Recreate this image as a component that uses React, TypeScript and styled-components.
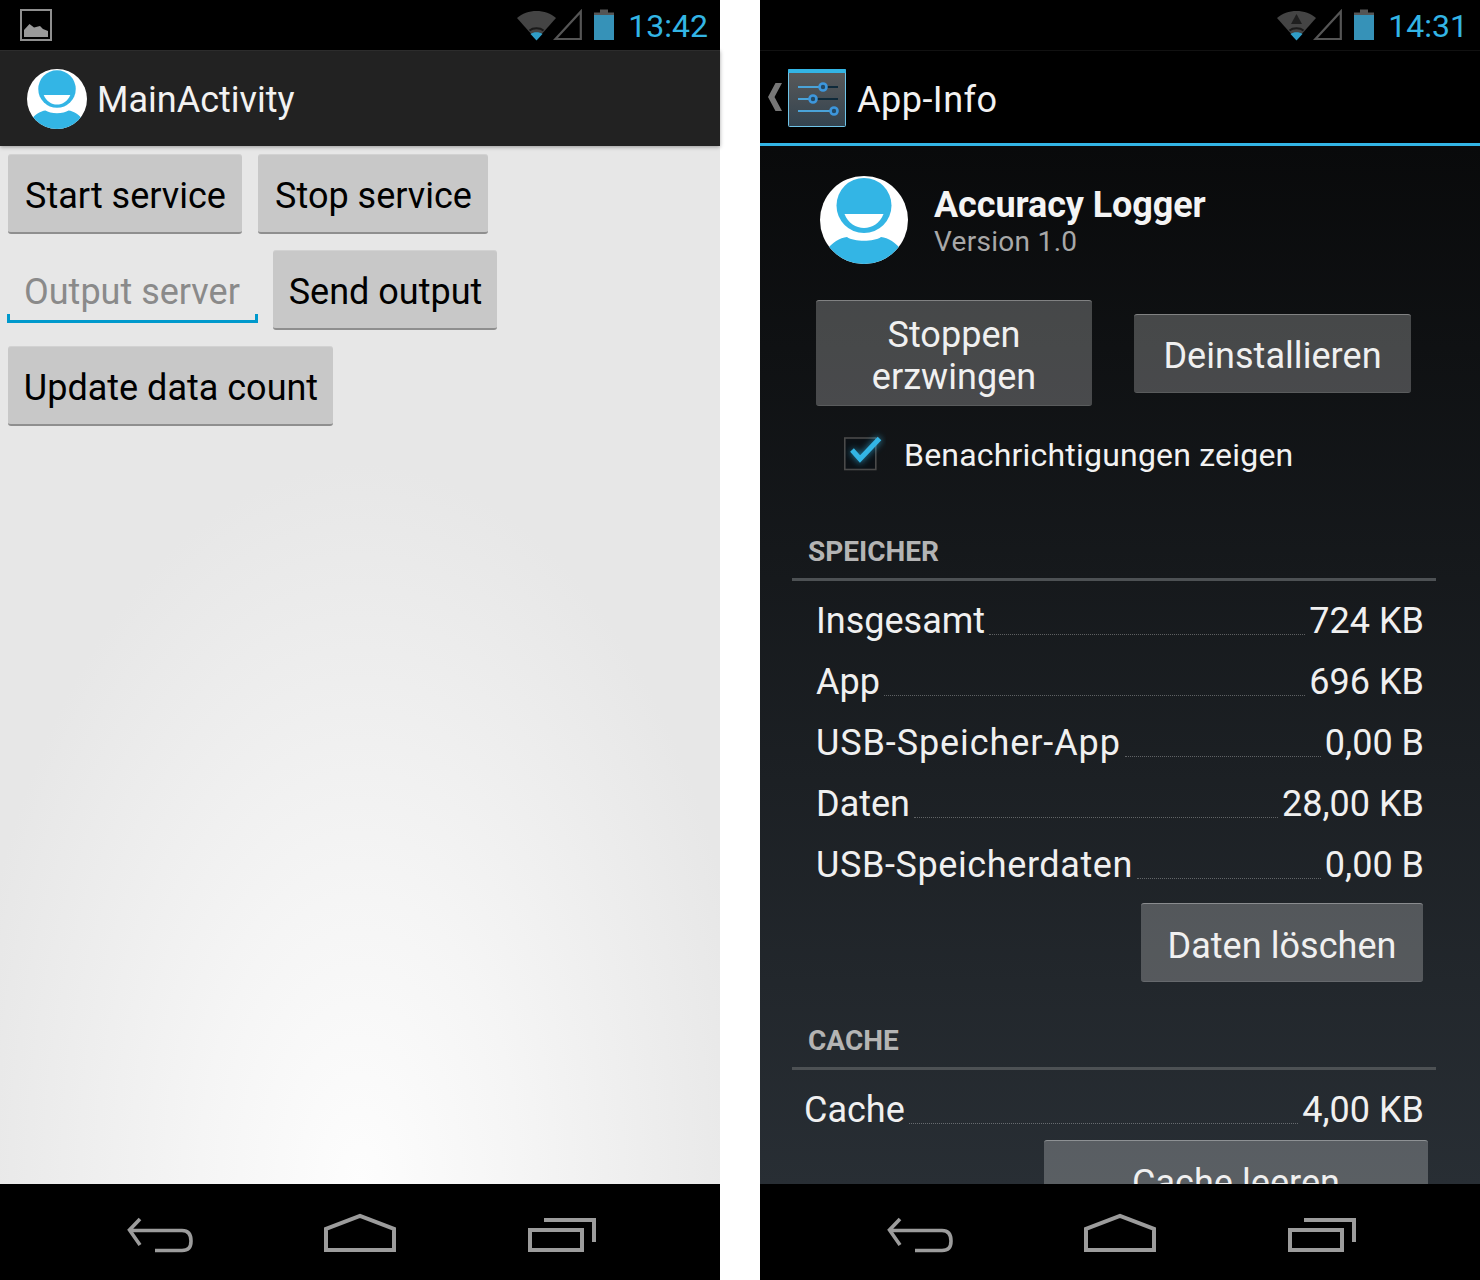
import React from "react";
import styled, { createGlobalStyle } from "styled-components";

const Global = createGlobalStyle`
  html, body { margin: 0; padding: 0; background: #fff; }
  body { font-family: Roboto, "Liberation Sans", sans-serif; }
  *, *::after { box-sizing: border-box; }
`;

const Page = styled.div`
  width: 1480px;
  height: 1280px;
  display: flex;
  gap: 40px;
  background: #fff;
`;
const Phone = styled.section`
  width: 720px;
  height: 1280px;
  display: flex;
  flex-direction: column;
  background: #000;
  position: relative;
`;
const StatusBar = styled.header`
  height: 50px;
  flex: none;
  display: flex;
  align-items: center;
  background: #000;
  padding: 0 12px 0 20px;
`;
const StatusRight = styled.div`
  margin-left: auto;
  display: flex;
  align-items: center;
`;
const Clock = styled.span`
  font-size: 32px;
  font-weight: 400;
  color: #33b5e5;
  margin: 2px 0 0 14px;
  line-height: 50px;
`;
const ActionBar = styled.div<{ $dark?: boolean }>`
  height: 96px;
  flex: none;
  display: flex;
  align-items: center;
  background: ${(p) => (p.$dark ? "#000" : "#222222")};
  border-top: 1px solid ${(p) => (p.$dark ? "#111" : "#2c2c2c")};
  border-bottom: ${(p) => (p.$dark ? "3px solid #33b5e5" : "0")};
  padding-left: ${(p) => (p.$dark ? "8px" : "27px")};
  position: relative;
  z-index: 2;
  ${(p) => (p.$dark ? "" : "box-shadow: 0 1px 4px rgba(0,0,0,.35);")}
`;
const BarTitle = styled.h1<{ $dark?: boolean }>`
  margin: ${(p) => (p.$dark ? "5px 0 0 11px" : "2px 0 0 10px")};
  font-size: 36px;
  font-weight: 400;
  color: #f2f2f2;
  line-height: 48px;
  letter-spacing: ${(p) => (p.$dark ? "0.5px" : "0")};
`;
const LightContent = styled.main`
  height: 1038px;
  flex: none;
  padding: 8px;
  display: flex;
  flex-direction: column;
  gap: 16px;
  background: radial-gradient(ellipse 400px 720px at 50% 100%, #fdfdfd 0%, #f5f5f5 40%, #e7e7e7 100%);
`;
const ButtonRow = styled.div`
  display: flex;
  align-items: center;
`;
const LightButton = styled.button<{ $w: number; $ml?: number }>`
  width: ${(p) => p.$w}px;
  margin-left: ${(p) => p.$ml ?? 0}px;
  height: 80px;
  padding: 4px 0 0 1px;
  border: 0;
  border-top: 1px solid #d2d2d2;
  border-bottom: 2px solid #8f8f8f;
  border-radius: 3px;
  background: #c8c8c8;
  color: #000;
  font: 400 36px/1 Roboto, sans-serif;
`;
const Field = styled.div`
  width: 250px;
  height: 80px;
  position: relative;
  padding: 22px 0 0 16px;
  font-size: 36px;
  line-height: 40px;
  color: #8a8a8a;
  &::after {
    content: "";
    position: absolute;
    left: -1px;
    right: 0;
    top: 64px;
    height: 9px;
    border: 3px solid #0099cc;
    border-top: 0;
  }
`;
const DarkContent = styled.main`
  height: 1038px;
  flex: none;
  overflow: hidden;
  background: linear-gradient(#090a0b 0%, #282e34 100%);
  display: flex;
  flex-direction: column;
  & > * {
    flex-shrink: 0;
  }
`;
const AppHead = styled.div`
  display: flex;
  align-items: center;
  margin: 30px 0 0 60px;
`;
const AppText = styled.div`
  margin-left: 26px;
  display: flex;
  flex-direction: column;
  padding-top: 3px;
`;
const AppName = styled.div`
  font-size: 36px;
  font-weight: 700;
  line-height: 40px;
  letter-spacing: -0.1px;
  color: #f4f4f4;
`;
const AppVersion = styled.div`
  font-size: 28px;
  line-height: 34px;
  letter-spacing: 0.3px;
  color: #a8a8a8;
`;
const Actions = styled.div`
  display: flex;
  align-items: center;
  gap: 42px;
  margin: 36px 0 0 56px;
`;
const DarkButton = styled.button<{ $w: number; $h?: number; $mr?: number; $mt?: number }>`
  width: ${(p) => p.$w}px;
  height: ${(p) => p.$h ?? 79}px;
  ${(p) => (p.$mr !== undefined ? `margin: ${p.$mt ?? 0}px ${p.$mr}px 0 auto;` : "")}
  flex: none;
  padding: 6px 12px 0;
  border: 0;
  border-top: 1px solid rgba(255, 255, 255, 0.32);
  border-bottom: 1px solid rgba(255, 255, 255, 0.1);
  border-radius: 3px;
  background: rgba(255, 255, 255, 0.235);
  color: #f0f0f0;
  font: 400 36px/42px Roboto, sans-serif;
  letter-spacing: 0.05px;
`;
const CheckRow = styled.label`
  height: 98px;
  display: flex;
  align-items: center;
  margin-left: 84px;
  font-size: 32px;
  letter-spacing: 0.2px;
  color: #f2f2f2;
  gap: 18px;
`;
const SectionHead = styled.h2<{ $mt: number }>`
  margin: ${(p) => p.$mt}px 0 0 32px;
  width: 644px;
  height: 51px;
  padding: 1px 0 0 16px;
  font-size: 28px;
  font-weight: 700;
  line-height: 42px;
  color: #b4b4b4;
  border-bottom: 3px solid #4d5154;
`;
const InfoRows = styled.div<{ $left: number; $mt: number }>`
  margin: ${(p) => p.$mt}px 56px 0 ${(p) => p.$left}px;
  display: flex;
  flex-direction: column;
`;
const InfoRow = styled.div`
  height: 61px;
  display: flex;
  align-items: center;
  padding-bottom: 2px;
  font-size: 36px;
  color: #f0f0f0;
`;
const RowLabel = styled.span<{ $ls?: number }>`
  letter-spacing: ${(p) => p.$ls ?? 0}px;
`;
const Leader = styled.span`
  flex: 1;
  align-self: flex-end;
  margin: 0 4px 15px 4px;
  border-bottom: 1px dotted rgba(255, 255, 255, 0.3);
`;
const NavBar = styled.nav`
  height: 96px;
  flex: none;
  display: flex;
  justify-content: center;
  align-items: center;
  padding-top: 4px;
  background: #000;
  position: relative;
  z-index: 2;
`;
const NavCell = styled.div`
  width: 200px;
  display: flex;
  justify-content: center;
`;

const Logo = ({ size }: { size: number }) => (
  <svg width={size} height={size} viewBox="0 0 88 88" style={{ flex: "none" }}>
    <defs>
      <clipPath id={`c${size}`}>
        <circle cx="44" cy="44" r="44" />
      </clipPath>
    </defs>
    <circle cx="44" cy="44" r="44" fill="#fff" />
    <circle cx="44" cy="29.5" r="27.5" fill="#33b5e5" />
    <path d="M24.5 38 H63.5 C60 47 52 52 44 52 C36 52 28 47 24.5 38 Z" fill="#fff" />
    <path
      clipPath={`url(#c${size})`}
      d="M0 88 L6 75 C12 66 20 62 27 61 C34 66 54 66 61 61 C68 62 76 66 82 75 L88 88 Z"
      fill="#33b5e5"
    />
  </svg>
);

const PictureIcon = () => (
  <svg width="32" height="32" viewBox="0 0 32 32">
    <rect x="1" y="1" width="30" height="30" fill="none" stroke="#8f8f8f" strokeWidth="2" />
    <path d="M4 28 V21 L9.5 15 L14 18.5 L20 17 L23 20 L28 22 V28 Z" fill="#9a9a9a" />
  </svg>
);

const SignalIcons = ({ upload }: { upload?: boolean }) => (
  <svg width="97" height="32" viewBox="0 0 97 32">
    <path d="M0 9 C10 -0.5 29 -0.5 39 9 L19.5 31 Z" fill="#444" />
    <path d="M12.5 21.5 C16 18.5 23 18.5 26.5 21.5" stroke="#1a1a1a" strokeWidth="2" fill="none" />
    <path d="M13.5 25 C16.5 22.5 22.5 22.5 25.5 25 L19.5 31.5 Z" fill="#2f9ec8" />
    {upload && <path d="M19.5 5 L25 15 H14 Z" fill="#1f1f1f" />}
    <path d="M38.5 30 H63.8 V2.5 Z" fill="none" stroke="#555" strokeWidth="2.2" />
    <rect x="77" y="5" width="20" height="26" fill="#3692b8" />
    <rect x="83" y="0.5" width="8" height="4" fill="#555" />
    <rect x="77" y="3.5" width="20" height="2.5" fill="#555" />
  </svg>
);

const Chevron = () => (
  <svg width="14" height="28" viewBox="0 0 14 28" style={{ flex: "none" }}>
    <path d="M14 0 L6.5 14 L14 28 H7.5 L0 14 L7.5 0 Z" fill="#777" />
  </svg>
);

const SettingsIcon = () => (
  <svg width="58" height="58" viewBox="0 0 58 58" style={{ flex: "none", margin: "2px 0 0 6px" }}>
    <defs>
      <linearGradient id="sg" x1="0" y1="0" x2="0" y2="1">
        <stop offset="0" stopColor="#5a5a5a" />
        <stop offset="1" stopColor="#33434f" />
      </linearGradient>
    </defs>
    <rect x="0.5" y="0.5" width="57" height="57" fill="url(#sg)" stroke="#6fc4e8" strokeWidth="1" rx="1" />
    <rect x="0" y="0" width="58" height="4" fill="#33b5e5" rx="1" />
    <path d="M10 18 H35" stroke="#4aa3d8" strokeWidth="2" />
    <path d="M35 18 H50" stroke="#0f2a3a" strokeWidth="2" />
    <path d="M10 30 H25" stroke="#4aa3d8" strokeWidth="2" />
    <path d="M25 30 H50" stroke="#0f2a3a" strokeWidth="2" />
    <path d="M10 42 H46" stroke="#4aa3d8" strokeWidth="2" />
    <circle cx="35" cy="18" r="3.5" fill="#234a66" stroke="#3d97dd" strokeWidth="2.6" />
    <circle cx="25" cy="30" r="3.5" fill="#234a66" stroke="#3d97dd" strokeWidth="2.6" />
    <circle cx="46" cy="42" r="3.5" fill="#234a66" stroke="#3d97dd" strokeWidth="2.6" />
  </svg>
);

const CheckIcon = () => (
  <svg width="42" height="44" viewBox="0 0 42 44" style={{ flex: "none", margin: "-8px 0 0 0" }}>
    <defs>
      <filter id="gl" x="-40%" y="-40%" width="180%" height="180%">
        <feGaussianBlur stdDeviation="3" />
      </filter>
    </defs>
    <rect x="0.8" y="9" width="31" height="31.5" fill="#0c1116" stroke="#4a4a4a" strokeWidth="1.6" />
    <path d="M8 21 L16 30 L36 9" fill="none" stroke="#33b5e5" strokeWidth="7" filter="url(#gl)" opacity="0.55" />
    <path d="M8 21 L16 30 L35.5 9.5" fill="none" stroke="#33b5e5" strokeWidth="5" />
  </svg>
);

const Back = () => (
  <svg width="72" height="44" viewBox="0 0 72 44">
    <path
      d="M16 7 L5.5 18 L16 33 M5.5 18.5 H58 C64 18.5 67 22 67 29 C67 36 64 38.5 58 38.5 H31"
      fill="none"
      stroke="#9c9c9c"
      strokeWidth="3.6"
    />
  </svg>
);
const Home = () => (
  <svg width="72" height="44" viewBox="0 0 72 44">
    <path d="M2 38 V17 L36 4 L70 17 V38 Z" fill="none" stroke="#9c9c9c" strokeWidth="4" />
  </svg>
);
const Recent = () => (
  <svg width="72" height="44" viewBox="0 0 72 44" style={{ marginLeft: 4 }}>
    <rect x="4" y="18" width="52" height="20" fill="none" stroke="#9c9c9c" strokeWidth="4" />
    <path d="M18 8 H68 V30" fill="none" stroke="#9c9c9c" strokeWidth="4" />
  </svg>
);

const Nav = () => (
  <NavBar>
    <NavCell>
      <Back />
    </NavCell>
    <NavCell>
      <Home />
    </NavCell>
    <NavCell>
      <Recent />
    </NavCell>
  </NavBar>
);

const storage: [string, string, number][] = [
  ["Insgesamt", "724 KB", 0],
  ["App", "696 KB", 0],
  ["USB-Speicher-App", "0,00 B", 0.9],
  ["Daten", "28,00 KB", 0],
  ["USB-Speicherdaten", "0,00 B", 0.6],
];

export default function App() {
  return (
    <>
      <Global />
      <Page>
        <Phone>
          <StatusBar>
            <PictureIcon />
            <StatusRight>
              <SignalIcons />
              <Clock>13:42</Clock>
            </StatusRight>
          </StatusBar>
          <ActionBar>
            <Logo size={60} />
            <BarTitle>MainActivity</BarTitle>
          </ActionBar>
          <LightContent>
            <ButtonRow>
              <LightButton $w={234}>Start service</LightButton>
              <LightButton $w={230} $ml={16}>
                Stop service
              </LightButton>
            </ButtonRow>
            <ButtonRow>
              <Field>Output server</Field>
              <LightButton $w={224} $ml={15}>
                Send output
              </LightButton>
            </ButtonRow>
            <ButtonRow>
              <LightButton $w={325}>Update data count</LightButton>
            </ButtonRow>
          </LightContent>
          <Nav />
        </Phone>
        <Phone>
          <StatusBar>
            <StatusRight>
              <SignalIcons upload />
              <Clock>14:31</Clock>
            </StatusRight>
          </StatusBar>
          <ActionBar $dark>
            <Chevron />
            <SettingsIcon />
            <BarTitle $dark>App-Info</BarTitle>
          </ActionBar>
          <DarkContent>
            <AppHead>
              <Logo size={88} />
              <AppText>
                <AppName>Accuracy Logger</AppName>
                <AppVersion>Version 1.0</AppVersion>
              </AppText>
            </AppHead>
            <Actions>
              <DarkButton $w={276} $h={106}>
                Stoppen erzwingen
              </DarkButton>
              <DarkButton $w={277}>Deinstallieren</DarkButton>
            </Actions>
            <CheckRow>
              <CheckIcon />
              Benachrichtigungen zeigen
            </CheckRow>
            <SectionHead $mt={26}>SPEICHER</SectionHead>
            <InfoRows $left={56} $mt={10}>
              {storage.map(([label, value, ls]) => (
                <InfoRow key={label}>
                  <RowLabel $ls={ls}>{label}</RowLabel>
                  <Leader />
                  {value}
                </InfoRow>
              ))}
            </InfoRows>
            <DarkButton $w={282} $mr={57} $mt={7}>
              Daten löschen
            </DarkButton>
            <SectionHead $mt={37}>CACHE</SectionHead>
            <InfoRows $left={44} $mt={10}>
              <InfoRow>
                Cache
                <Leader />
                4,00 KB
              </InfoRow>
            </InfoRows>
            <DarkButton $w={384} $mr={52} $mt={-1}>
              Cache leeren
            </DarkButton>
          </DarkContent>
          <Nav />
        </Phone>
      </Page>
    </>
  );
}
